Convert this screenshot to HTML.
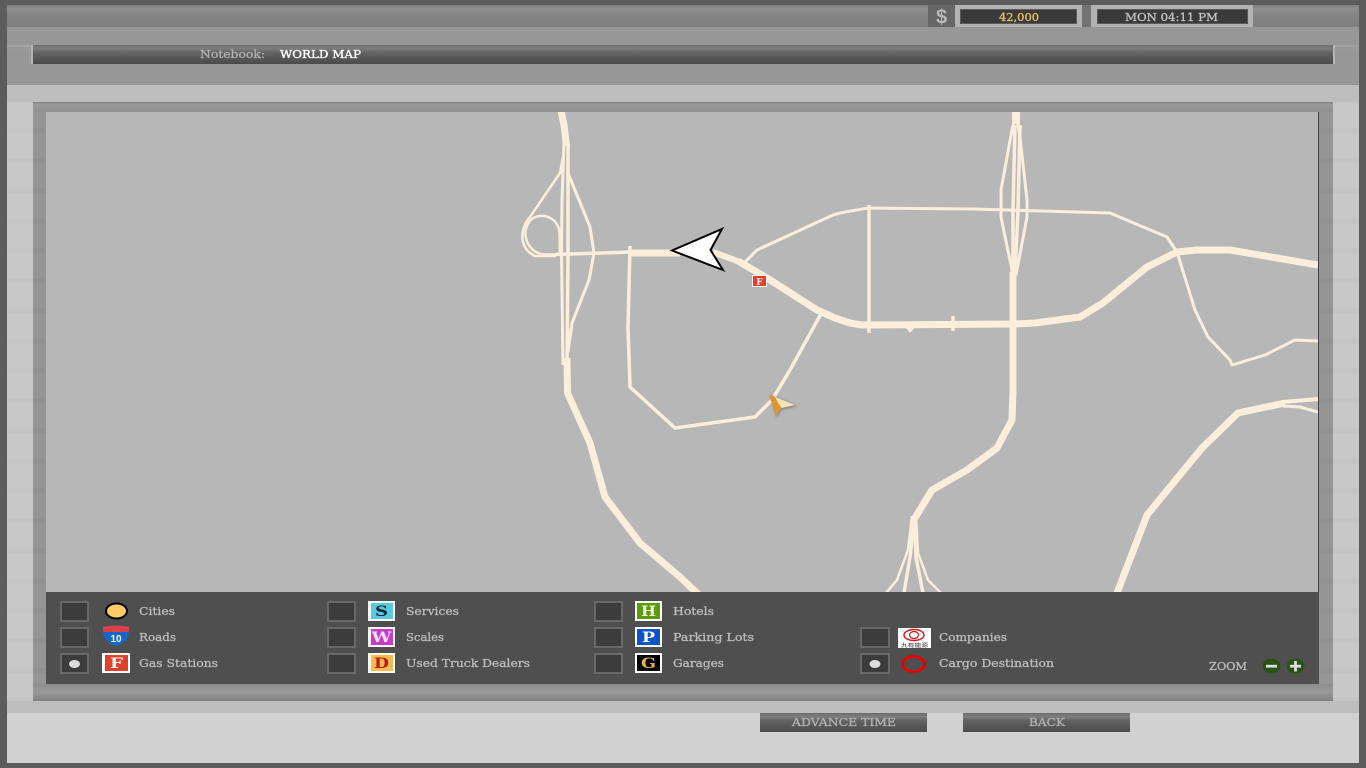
<!DOCTYPE html>
<html>
<head>
<meta charset="utf-8">
<style>
html,body{margin:0;padding:0;background:#5c5c5c;width:1366px;height:768px;overflow:hidden}
svg{display:block}
text{font-family:"DejaVu Serif","Liberation Serif",serif;font-size:11px}
.l{fill:#bcbcbc;stroke:#bcbcbc;stroke-width:.3;font-size:11px}
.k{fill:none;stroke:#fbeedb;stroke-linejoin:round;stroke-linecap:butt}
</style>
</head>
<body>
<svg width="1366" height="768" viewBox="0 0 1366 768" xmlns="http://www.w3.org/2000/svg">
<defs>
<linearGradient id="bar" x1="0" y1="0" x2="0" y2="1"><stop offset="0" stop-color="#6c6c6c"/><stop offset=".18" stop-color="#7e7e7e"/><stop offset=".4" stop-color="#636363"/><stop offset="1" stop-color="#4a4a4a"/></linearGradient>
<linearGradient id="top" x1="0" y1="0" x2="0" y2="1"><stop offset="0" stop-color="#7c7c7c"/><stop offset=".15" stop-color="#8f8f8f"/><stop offset=".5" stop-color="#838383"/><stop offset="1" stop-color="#7f7f7f"/></linearGradient>
<linearGradient id="ft" x1="0" y1="0" x2="0" y2="1"><stop offset="0" stop-color="#838383"/><stop offset=".25" stop-color="#9a9a9a"/><stop offset="1" stop-color="#8f8f8f"/></linearGradient>
<linearGradient id="fb" x1="0" y1="0" x2="0" y2="1"><stop offset="0" stop-color="#8d8d8d"/><stop offset=".5" stop-color="#999"/><stop offset="1" stop-color="#808080"/></linearGradient>
<linearGradient id="sd" x1="0" y1="0" x2="0" y2="1"><stop offset="0" stop-color="#a8a8a8"/><stop offset=".4" stop-color="#999"/><stop offset="1" stop-color="#979797"/></linearGradient>
<pattern id="st1" width="30" height="30" patternUnits="userSpaceOnUse" y="8"><rect width="30" height="30" fill="#c8c8c8"/><rect width="30" height="5" fill="#c4c4c4"/></pattern>
<pattern id="st2" width="30" height="30" patternUnits="userSpaceOnUse" y="8"><rect width="30" height="30" fill="#959595"/><rect width="30" height="5" fill="#919191"/></pattern>
<clipPath id="mapc"><rect x="46" y="112" width="1272" height="480"/></clipPath>
<filter id="sh" x="-30%" y="-30%" width="160%" height="160%"><feGaussianBlur stdDeviation="1.2"/></filter>
</defs>

<rect width="1366" height="768" fill="#5c5c5c"/>
<rect x="7" y="5" width="1352" height="22" fill="url(#top)"/>
<rect x="7" y="27" width="1352" height="58" fill="#979797"/>
<rect x="7" y="45" width="24" height="7" fill="url(#sd)"/>
<rect x="1335" y="45" width="24" height="7" fill="url(#sd)"/>
<rect x="7" y="85" width="1352" height="17" fill="#bdbdbd"/>
<rect x="7" y="102" width="26" height="599" fill="url(#st1)"/>
<rect x="1333" y="102" width="26" height="599" fill="url(#st1)"/>
<rect x="7" y="701" width="1352" height="12" fill="#bdbdbd"/>
<rect x="7" y="713" width="1352" height="50" fill="#d1d1d1"/>

<!-- top status -->
<rect x="928" y="5" width="27" height="22" fill="#666"/>
<text x="941.5" y="23.5" text-anchor="middle" style="font-family:'Liberation Sans',sans-serif;font-size:20px;font-weight:bold;fill:#b8b8b8">$</text>
<rect x="955" y="5" width="127" height="22" fill="#b2b2b2"/>
<rect x="960.5" y="9.5" width="116" height="14" fill="#3a3a3a" stroke="#5a5a5a" stroke-width="1"/>
<rect x="1082" y="5" width="9" height="22" fill="#737373"/>
<rect x="1091" y="5" width="162" height="22" fill="#b2b2b2"/>
<rect x="1097.5" y="9.5" width="150" height="14" fill="#3a3a3a" stroke="#5a5a5a" stroke-width="1"/>
<text x="999" y="21" textLength="40" lengthAdjust="spacingAndGlyphs" style="fill:#efc165;stroke:#efc165;stroke-width:.3">42,000</text>
<text x="1125" y="21" textLength="93" lengthAdjust="spacingAndGlyphs" style="fill:#c4c4c4;stroke:#c4c4c4;stroke-width:.3">MON 04:11 PM</text>

<!-- notebook bar -->
<rect x="33" y="45" width="1300" height="19" fill="url(#bar)"/>
<rect x="31" y="45" width="2" height="19" fill="#b4b4b4"/>
<rect x="1333" y="45" width="2" height="19" fill="#b4b4b4"/>
<text x="200" y="58" textLength="65" lengthAdjust="spacingAndGlyphs" style="fill:#b0b0b0;stroke:#b0b0b0;stroke-width:.3">Notebook:</text>
<text x="280" y="58" textLength="81" lengthAdjust="spacingAndGlyphs" style="fill:#fff;stroke:#fff;stroke-width:.35">WORLD MAP</text>

<!-- frame -->
<rect x="33" y="102" width="1300" height="599" fill="url(#st2)"/>
<rect x="33" y="102" width="1300" height="10" fill="url(#ft)"/>
<rect x="33" y="684" width="1300" height="17" fill="url(#fb)"/>
<rect x="46" y="112" width="1272" height="480" fill="#b7b7b7"/>
<rect x="1318" y="112" width="1" height="480" fill="#404040"/>

<!-- roads -->
<g clip-path="url(#mapc)">
<path class="k" stroke-width="7" d="M561 110 L564 125 L566.5 146"/>
<path class="k" stroke-width="3" d="M564 143 L562 200 L561.5 253 L563 365"/>
<path class="k" stroke-width="3.5" d="M568 143 L568 253 L567 365"/>
<path class="k" stroke-width="7" d="M567 358 L567.5 393 L590 443 L605 497 L640 543 L680 577 L699 595"/>
<path class="k" stroke-width="3" d="M568 173 L590 227 L594 253 L589 280 L572 323 L568 352"/>
<path class="k" stroke-width="2.5" d="M563 157 L560 173 L530 217 C520 228 518 248 535 256 L556 256"/>
<path class="k" stroke-width="2.5" d="M559.5 232 C558 220 548 215 540 216 C528 217 524 230 526 238 C528 248 536 254 545 254.5 L556 254.5"/>
<path class="k" stroke-width="2.5" d="M559.5 228 L560 255"/>
<path class="k" stroke-width="3.5" d="M555 254.5 L632 252"/>
<path class="k" stroke-width="7" d="M628 253 L680 253"/>
<path class="k" stroke-width="6" d="M713 252 L740 262"/>
<path class="k" stroke-width="7" d="M738 261 L767 278 L817 310 L835 318 L850 323 L862 325 L1013 324 L1035 323 L1080 317 L1103 303 L1147 267 L1177 252 L1197 250 L1230 250 L1318 265"/>
<path class="k" stroke-width="3.5" d="M630 246 L628 327 L630 387 L675 428 L755 417 L772 400 L790 370 L822 312"/>
<path class="k" stroke-width="3" d="M745 262 L757 250 L833 215 L840 213 L868 208 L973 209 L1110 213 L1167 237 L1177 252"/>
<path class="k" stroke-width="3" d="M1177 252 L1195 310 L1208 337 L1230 360 L1232 365 L1265 355 L1295 340 L1318 341"/>
<path class="k" stroke-width="3.5" d="M869 205 L869 333"/>
<path class="k" stroke-width="3.5" d="M953 316 L953 331"/>
<path fill="#fbeedb" d="M904 326 L916 326 L910 333 Z"/>
<path class="k" stroke-width="8" d="M1016 112 L1016 124"/>
<path class="k" stroke-width="3" d="M1015 118 L1012 130 L1001 190 L1001 217 L1012 270 L1013 284"/>
<path class="k" stroke-width="3" d="M1017 118 L1020 137 L1027 200 L1027 217 L1016 275"/>
<path class="k" stroke-width="3.5" d="M1015 125 L1013 210 L1013 282"/>
<path class="k" stroke-width="3.5" d="M1020 125 L1018 210 L1015 276"/>
<path class="k" stroke-width="7" d="M1013 272 L1013 390 L1012 420 L997 448 L967 470 L932 490 L915 518"/>
<path class="k" stroke-width="2.5" d="M912 516 L908 550 L897 580 L886 593"/>
<path class="k" stroke-width="3.5" d="M915 516 L910 557 L904 593"/>
<path class="k" stroke-width="3.5" d="M915 516 L916 557 L923 593"/>
<path class="k" stroke-width="2.5" d="M916 516 L918 553 L928 580 L941 593"/>
<path class="k" stroke-width="7" d="M1117 593 L1147 515 L1202 448 L1238 413 L1285 403"/>
<path class="k" stroke-width="4" d="M1283 402 L1318 399"/>
<path class="k" stroke-width="3" d="M1283 406 L1300 407 L1318 412"/>
</g>

<!-- map F marker -->
<rect x="752" y="275" width="15" height="12" fill="#fff"/>
<rect x="753" y="276" width="13" height="10" fill="#e2402a"/>
<text x="759.5" y="285" text-anchor="middle" style="font-size:9px;font-weight:bold;fill:#fff">F</text>

<!-- player arrow -->
<path d="M672 250.5 L722 229 L710.5 250 L723 270 Z" fill="#fff" stroke="#000" stroke-width="2" stroke-linejoin="miter"/>

<!-- cursor -->
<path d="M770 395 L797 406 L781 410 L777 418 Z" fill="#555" opacity=".55" filter="url(#sh)"/>
<path d="M775 397 L795 405 L781.5 408 L778 403 Z" fill="#fbe4b4"/>
<path d="M769 394 L775 397 L778 403 L781.5 408 L776 416 Z" fill="#db9630"/>

<!-- legend -->
<rect x="46" y="592" width="1273" height="92" fill="#4f4f4f"/>
<g fill="#3c3c3c" stroke="#696969" stroke-width="2">
<rect x="61" y="602" width="27" height="19"/><rect x="61" y="628" width="27" height="19"/><rect x="61" y="654" width="27" height="19"/>
<rect x="328" y="602" width="27" height="19"/><rect x="328" y="628" width="27" height="19"/><rect x="328" y="654" width="27" height="19"/>
<rect x="595" y="602" width="27" height="19"/><rect x="595" y="628" width="27" height="19"/><rect x="595" y="654" width="27" height="19"/>
<rect x="861" y="628" width="28" height="19"/><rect x="861" y="654" width="28" height="19"/>
</g>
<ellipse cx="74.5" cy="664" rx="5.5" ry="4" fill="#dcdcdc"/>
<ellipse cx="875" cy="664" rx="5.5" ry="4" fill="#dcdcdc"/>

<ellipse cx="116.5" cy="611" rx="10.5" ry="7.5" fill="#ffcc66" stroke="#000" stroke-width="2"/>

<!-- shield -->
<path d="M103 627 Q116 624 129 627 C130 640 123 644 116 646 C109 644 102 640 103 627 Z" fill="#1665c8"/>
<path d="M103 627 Q116 624 129 627 L129 632 L103 632 Z" fill="#d9404a"/>
<text x="116" y="642" text-anchor="middle" style="font-family:'Liberation Sans',sans-serif;font-size:10px;font-weight:bold;fill:#fff">10</text>

<!-- letter icons -->
<rect x="102" y="653" width="28" height="20" fill="#fff"/><rect x="105" y="655" width="23" height="16" fill="#e2402a"/>
<text x="116.5" y="668" text-anchor="middle" textLength="13" lengthAdjust="spacingAndGlyphs" style="font-size:14px;font-weight:bold;fill:#fff">F</text>

<rect x="368" y="601" width="27" height="20" fill="#fff"/><rect x="371" y="603" width="22" height="16" fill="#5cc8e0"/>
<text x="381.5" y="616" text-anchor="middle" textLength="13" lengthAdjust="spacingAndGlyphs" style="font-size:14px;font-weight:bold;fill:#0a2530">S</text>
<rect x="368" y="627" width="27" height="20" fill="#fff"/><rect x="371" y="629" width="22" height="16" fill="#c83cc8"/>
<text x="381.5" y="642" text-anchor="middle" textLength="20" lengthAdjust="spacingAndGlyphs" style="font-size:14px;font-weight:bold;fill:#f8e0f8">W</text>
<rect x="368" y="653" width="27" height="20" fill="#fff"/><rect x="371" y="655" width="22" height="16" fill="#fdbb4e"/>
<text x="381.5" y="668" text-anchor="middle" textLength="15" lengthAdjust="spacingAndGlyphs" style="font-size:14px;font-weight:bold;fill:#b81c10">D</text>

<rect x="635" y="601" width="27" height="20" fill="#fff"/><rect x="637" y="603" width="23" height="16" fill="#5c9c0c"/>
<text x="648.5" y="616" text-anchor="middle" textLength="15" lengthAdjust="spacingAndGlyphs" style="font-size:14px;font-weight:bold;fill:#f0f8e0">H</text>
<rect x="635" y="627" width="27" height="20" fill="#fff"/><rect x="637" y="629" width="23" height="16" fill="#0c54c8"/>
<text x="648.5" y="642" text-anchor="middle" textLength="13" lengthAdjust="spacingAndGlyphs" style="font-size:14px;font-weight:bold;fill:#fff">P</text>
<rect x="635" y="653" width="27" height="20" fill="#fff"/><rect x="637" y="655" width="23" height="16" fill="#000"/>
<text x="648.5" y="668" text-anchor="middle" textLength="15" lengthAdjust="spacingAndGlyphs" style="font-size:14px;font-weight:bold;fill:#e8b050">G</text>

<!-- company -->
<rect x="898" y="628" width="33" height="20" fill="#fff"/>
<ellipse cx="914" cy="635" rx="10" ry="5.5" fill="none" stroke="#d81818" stroke-width="1.5"/>
<ellipse cx="914" cy="635" rx="4.5" ry="3.5" fill="none" stroke="#d81818" stroke-width="1.2"/>
<text x="914.5" y="647" text-anchor="middle" textLength="27" lengthAdjust="spacingAndGlyphs" style="font-family:'Noto Sans CJK SC',sans-serif;font-size:5px;fill:#222">九有能源</text>

<ellipse cx="913.5" cy="664" rx="11" ry="7.5" fill="none" stroke="#e60000" stroke-width="3"/>

<!-- labels -->
<text class="l" x="139" y="615" textLength="36" lengthAdjust="spacingAndGlyphs">Cities</text>
<text class="l" x="139" y="641" textLength="37" lengthAdjust="spacingAndGlyphs">Roads</text>
<text class="l" x="139" y="667" textLength="79" lengthAdjust="spacingAndGlyphs">Gas Stations</text>
<text class="l" x="406" y="615" textLength="53" lengthAdjust="spacingAndGlyphs">Services</text>
<text class="l" x="406" y="641" textLength="38" lengthAdjust="spacingAndGlyphs">Scales</text>
<text class="l" x="406" y="667" textLength="124" lengthAdjust="spacingAndGlyphs">Used Truck Dealers</text>
<text class="l" x="673" y="615" textLength="41" lengthAdjust="spacingAndGlyphs">Hotels</text>
<text class="l" x="673" y="641" textLength="81" lengthAdjust="spacingAndGlyphs">Parking Lots</text>
<text class="l" x="673" y="667" textLength="51" lengthAdjust="spacingAndGlyphs">Garages</text>
<text class="l" x="939" y="641" textLength="68" lengthAdjust="spacingAndGlyphs">Companies</text>
<text class="l" x="939" y="667" textLength="115" lengthAdjust="spacingAndGlyphs">Cargo Destination</text>
<text class="l" x="1209" y="670" textLength="38" lengthAdjust="spacingAndGlyphs">ZOOM</text>

<!-- zoom buttons -->
<ellipse cx="1271.5" cy="666" rx="9" ry="7.5" fill="#2c5216"/>
<rect x="1266" y="664.8" width="11" height="2.8" fill="#ddd"/>
<ellipse cx="1295.5" cy="666" rx="9" ry="7.5" fill="#2c5216"/>
<rect x="1290" y="664.8" width="11" height="2.8" fill="#ddd"/>
<rect x="1294.1" y="661" width="2.8" height="10.5" fill="#ddd"/>

<!-- buttons -->
<rect x="760" y="713" width="167" height="19" fill="url(#bar)"/>
<rect x="963" y="713" width="167" height="19" fill="url(#bar)"/>
<text x="792" y="726" textLength="104" lengthAdjust="spacingAndGlyphs" style="fill:#b0b0b0;stroke:#b0b0b0;stroke-width:.35">ADVANCE TIME</text>
<text x="1029" y="726" textLength="36" lengthAdjust="spacingAndGlyphs" style="fill:#b0b0b0;stroke:#b0b0b0;stroke-width:.35">BACK</text>
</svg>
</body>
</html>
